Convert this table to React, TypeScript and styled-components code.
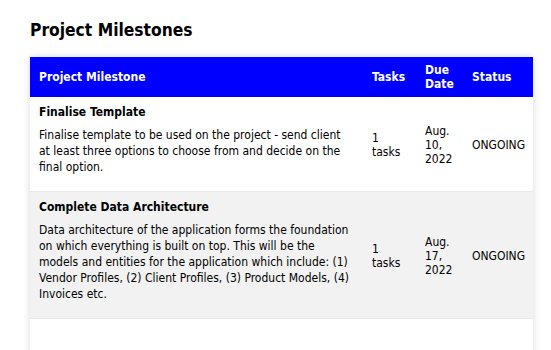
import React from 'react'
import styled, { createGlobalStyle } from 'styled-components'

type Milestone = {
    id: number
    title: string
    description: string
    tasks: number
    dueDate: string
    status: string
}

const milestones: Milestone[] = [
    {
        id: 1,
        title: 'Finalise Template',
        description:
            'Finalise template to be used on the project - send client at least three options to choose from and decide on the final option.',
        tasks: 1,
        dueDate: 'Aug. 10, 2022',
        status: 'ONGOING',
    },
    {
        id: 2,
        title: 'Complete Data Architecture',
        description:
            'Data architecture of the application forms the foundation on which everything is built on top. This will be the models and entities for the application which include: (1) Vendor Profiles, (2) Client Profiles, (3) Product Models, (4) Invoices etc.',
        tasks: 1,
        dueDate: 'Aug. 17, 2022',
        status: 'ONGOING',
    },
]

const GlobalStyle = createGlobalStyle`
    body {
        margin: 0;
        background: #ffffff;
        font-family: "DejaVu Sans Condensed", "DejaVu Sans", sans-serif;
        font-stretch: condensed;
        color: #000000;
    }
`

const App = () => {
    return (
        <>
            <GlobalStyle />
            <Page>
                <Title>Project Milestones</Title>
                <Card>
                    <Table>
                        <colgroup>
                            <col style={{ width: 333 }} />
                            <col style={{ width: 53 }} />
                            <col style={{ width: 47 }} />
                            <col />
                        </colgroup>
                        <thead>
                            <HeaderRow>
                                <HeaderCell>Project Milestone</HeaderCell>
                                <HeaderCell>Tasks</HeaderCell>
                                <HeaderCell>Due Date</HeaderCell>
                                <HeaderCell>Status</HeaderCell>
                            </HeaderRow>
                        </thead>
                        <tbody>
                            {milestones.map((m, i) => (
                                <Row key={m.id} striped={i % 2 === 1}>
                                    <Cell>
                                        <MilestoneTitle>{m.title}</MilestoneTitle>
                                        <Description>{m.description}</Description>
                                    </Cell>
                                    <Cell>{m.tasks} tasks</Cell>
                                    <Cell>{m.dueDate}</Cell>
                                    <Cell>{m.status}</Cell>
                                </Row>
                            ))}
                            <Row striped={false}>
                                <EmptyCell colSpan={4} />
                            </Row>
                        </tbody>
                    </Table>
                </Card>
            </Page>
        </>
    )
}

const Page = styled.div`
    padding: 20px 18px 0 30px;
`

const Title = styled.h2`
    margin: 0 0 16px;
    font-size: 17.3px;
    font-weight: 700;
    line-height: 21px;
`

const Card = styled.div`
    background: #ffffff;
    box-shadow: 0 0 8px rgba(0, 0, 0, 0.14);
`

const Table = styled.table`
    width: 100%;
    border-collapse: collapse;
    table-layout: fixed;
    font-size: 12px;
`

const HeaderRow = styled.tr`
    background: #0000ff;
    color: #ffffff;
`

const HeaderCell = styled.th`
    height: 40px;
    box-sizing: border-box;
    padding: 6px 9px;
    text-align: left;
    font-weight: 700;
    line-height: 14px;
    vertical-align: middle;
`

const Row = styled.tr<{ striped: boolean }>`
    background: ${({ striped }) => (striped ? '#f2f2f2' : '#ffffff')};
    border-bottom: 1px solid #e8e8e8;
`

const Cell = styled.td`
    padding: 8px 9px 6px;
    vertical-align: middle;
    line-height: 14px;
`

const EmptyCell = styled.td`
    height: 60px;
`

const MilestoneTitle = styled.div`
    margin: 0 0 8px;
    font-weight: 700;
    line-height: 14px;
`

const Description = styled.p`
    margin: 0 0 10px;
    line-height: 16px;
`

export default App
